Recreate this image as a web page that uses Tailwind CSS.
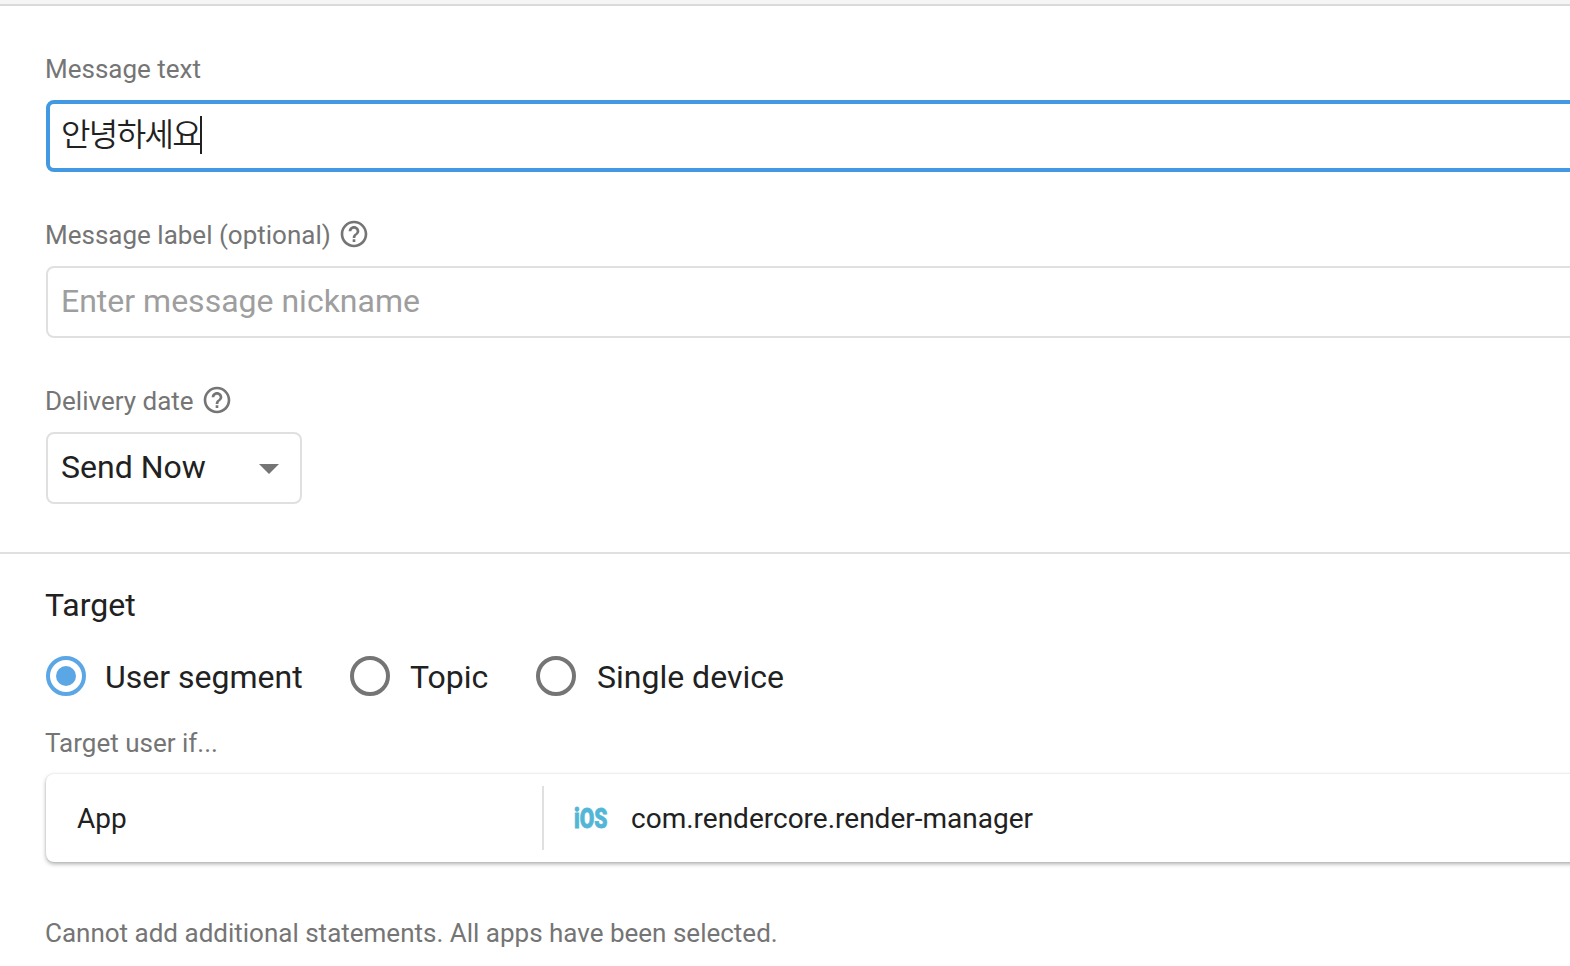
<!DOCTYPE html>
<html lang="en">
<head>
<meta charset="utf-8">
<title>Compose message</title>
<script src="https://cdn.jsdelivr.net/npm/@tailwindcss/browser@4"></script>
</head>
<body class="w-[1570px] h-[966px] overflow-hidden bg-white text-[#212121] font-['Roboto','Noto_Sans_CJK_KR',sans-serif] antialiased">
<div class="h-1.5 bg-[#f5f5f5] border-b-2 border-[#dadada]"></div>
<section class="h-[548px] pt-12 pl-[46px] border-b-2 border-[#e0e0e0]">
  <div class="-ml-px h-[30px] leading-[30px] text-[26px] text-[#757575] whitespace-nowrap">Message text</div>
  <div class="mt-4 w-[1560px] h-[72px] rounded-lg border-4 border-[#4299e1] flex items-center pl-[11px] pb-[3px]">
    <span class="text-[32px] leading-8 tracking-[-1.6px] font-[350] whitespace-nowrap">안녕하세요</span>
    <span class="w-0.5 h-[38px] bg-[#212121]"></span>
  </div>
  <div class="-ml-px mt-12 h-[30px] leading-[30px] flex items-center text-[26px] text-[#757575] whitespace-nowrap">
    <span>Message label (optional)</span>
    <svg class="ml-[7px] w-8 h-8 shrink-0 -mt-0.5" viewBox="0 0 24 24" fill="currentColor"><path d="M11 18h2v-2h-2v2zm1-16C6.480 2 2 6.480 2 12s4.480 10 10 10 10-4.480 10-10S17.520 2 12 2zm0 18c-4.410 0-8-3.590-8-8s3.590-8 8-8 8 3.590 8 8-3.590 8-8 8zm0-14c-2.210 0-4 1.790-4 4h2c0-1.100.9-2 2-2s2 .9 2 2c0 2-3 1.750-3 5h2c0-2.250 3-2.500 3-5 0-2.210-1.790-4-4-4z"/></svg>
  </div>
  <div class="mt-4 w-[1560px] h-[72px] rounded-lg border-2 border-[#e0e0e0] flex items-center pl-[13px] pb-0.5">
    <span class="text-[32px] leading-8 text-[#9e9e9e] whitespace-nowrap">Enter message nickname</span>
  </div>
  <div class="-ml-px mt-12 h-[30px] leading-[30px] flex items-center text-[26px] text-[#757575] whitespace-nowrap">
    <span>Delivery date</span>
    <svg class="ml-[7px] w-8 h-8 shrink-0 -mt-0.5" viewBox="0 0 24 24" fill="currentColor"><path d="M11 18h2v-2h-2v2zm1-16C6.480 2 2 6.480 2 12s4.480 10 10 10 10-4.480 10-10S17.520 2 12 2zm0 18c-4.410 0-8-3.590-8-8s3.590-8 8-8 8 3.590 8 8-3.590 8-8 8zm0-14c-2.210 0-4 1.790-4 4h2c0-1.100.9-2 2-2s2 .9 2 2c0 2-3 1.750-3 5h2c0-2.250 3-2.500 3-5 0-2.210-1.790-4-4-4z"/></svg>
  </div>
  <div class="mt-4 w-64 h-[72px] rounded-lg border-2 border-[#e0e0e0] flex items-center justify-between pl-[13px] pr-[21px]">
    <span class="text-[32px] leading-8 pb-0.5 whitespace-nowrap">Send Now</span>
    <svg class="w-5 h-2.5 mt-px" viewBox="0 0 20 10"><path d="M0 0h20L10 10z" fill="#757575"/></svg>
  </div>
</section>
<section class="pl-[46px] pt-[35px]">
  <h2 class="-ml-px text-[32px] leading-8">Target</h2>
  <div class="mt-[35px] h-10 flex items-center text-[32px] leading-10 whitespace-nowrap">
    <div class="w-[304px] flex items-center">
      <span class="size-10 rounded-full border-4 border-[#5ba7e5] flex items-center justify-center"><span class="size-5 rounded-full bg-[#5ba7e5]"></span></span>
      <span class="ml-[19px] pt-0.5">User segment</span>
    </div>
    <div class="w-[186px] flex items-center">
      <span class="size-10 rounded-full border-4 border-[#757575]"></span>
      <span class="ml-5 pt-0.5">Topic</span>
    </div>
    <div class="flex items-center">
      <span class="size-10 rounded-full border-4 border-[#757575]"></span>
      <span class="ml-[21px] pt-0.5">Single device</span>
    </div>
  </div>
  <div class="-ml-px mt-8 h-[30px] leading-[30px] text-[26px] text-[#757575]">Target user if...</div>
  <div class="mt-4 w-[1560px] h-[88px] rounded-lg flex items-center text-[28px] leading-8 whitespace-nowrap shadow-[0_2px_4px_rgba(50,60,58,0.4),0_0_2px_rgba(50,60,58,0.12)]">
    <div class="w-[496px] pl-[31px] pt-0.5">App</div>
    <div class="w-0.5 h-16 bg-[#e0e0e0]"></div>
    <svg class="ml-[30px] w-9 h-9 overflow-visible" viewBox="0 0 36 36"><text x="0" y="28" font-family="Roboto, sans-serif" font-weight="900" font-size="27" textLength="33.500" lengthAdjust="spacingAndGlyphs" fill="#53b6d6" stroke="#53b6d6" stroke-width="0.800">iOS</text></svg>
    <span class="ml-[21px] pt-0.5">com.rendercore.render-manager</span>
  </div>
  <p class="-ml-px mt-14 leading-[30px] text-[26px] text-[#757575] whitespace-nowrap">Cannot add additional statements. All apps have been selected.</p>
</section>
</body>
</html>
